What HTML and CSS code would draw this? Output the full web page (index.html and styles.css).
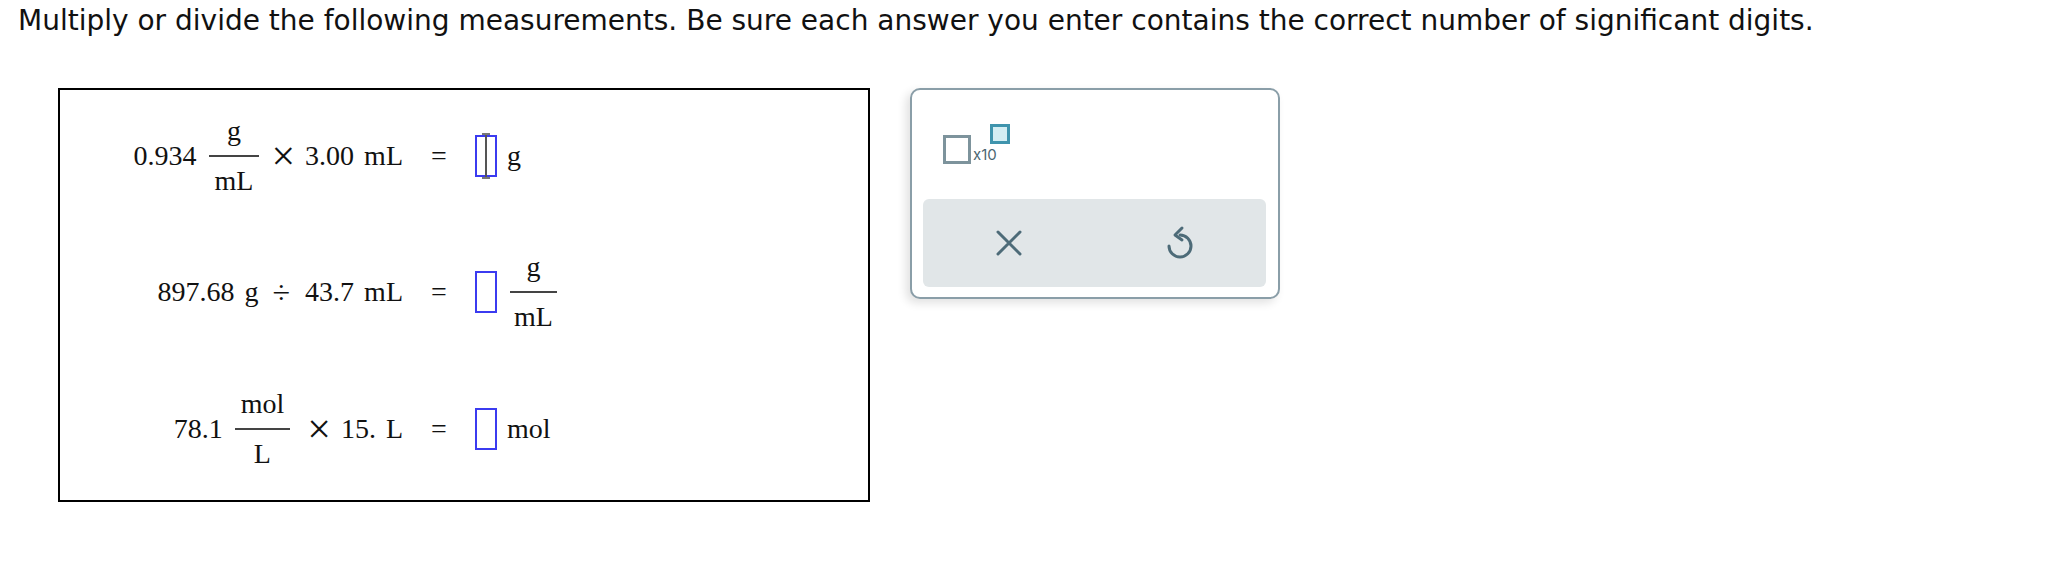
FILE: index.html
```html
<!DOCTYPE html>
<html lang="en">
<head>
<meta charset="utf-8">
<title>Significant digits</title>
<link rel="stylesheet" href="styles.css">
</head>
<body>
<p class="prompt">Multiply or divide the following measurements. Be sure each answer you enter contains the correct number of significant digits.</p>
<div class="workspace">
  <div class="problems">
    <div class="lhs">
      <span class="num">0.934</span>
      <span class="frac"><span class="top">g</span><span class="bar"></span><span class="bot">mL</span></span>
      <span class="op">×</span><span class="num">3.00</span><span class="unit">mL</span>
    </div>
    <div class="eq">=</div>
    <div class="ans">
      <span class="box active"><span class="caret"></span></span>
      <span class="unit">g</span>
    </div>

    <div class="lhs">
      <span class="num">897.68</span><span class="unit">g</span>
      <span class="op div">÷</span><span class="num">43.7</span><span class="unit">mL</span>
    </div>
    <div class="eq">=</div>
    <div class="ans">
      <span class="box"></span>
      <span class="frac"><span class="top">g</span><span class="bar"></span><span class="bot">mL</span></span>
    </div>

    <div class="lhs">
      <span class="num">78.1</span>
      <span class="frac wide"><span class="top">mol</span><span class="bar"></span><span class="bot">L</span></span>
      <span class="op">×</span><span class="num">15.</span><span class="unit">L</span>
    </div>
    <div class="eq">=</div>
    <div class="ans">
      <span class="box"></span>
      <span class="unit">mol</span>
    </div>
  </div>

  <div class="panel">
    <div class="sci">
      <span class="base"></span>
      <span class="x10">x10</span>
      <span class="exp"></span>
    </div>
    <div class="actions">
      <button class="act" type="button" aria-label="Clear">
        <svg width="26" height="26" viewBox="0 0 26 26"><path d="M2 2 L24 24 M24 2 L2 24" stroke="#4d6b78" stroke-width="3" stroke-linecap="round" fill="none"/></svg>
      </button>
      <button class="act" type="button" aria-label="Undo">
        <svg width="30" height="36" viewBox="0 0 30 36"><path d="M15 10 A11 11 0 1 1 4 21" stroke="#4d6b78" stroke-width="3" stroke-linecap="round" fill="none"/><path d="M17 3 L10 10 L17 15" stroke="#4d6b78" stroke-width="3" stroke-linecap="round" stroke-linejoin="round" fill="none"/></svg>
      </button>
    </div>
  </div>
</div>
</body>
</html>
```
FILE: styles.css
```css
body {
  margin: 8px;
  background: #ffffff;
  color: #000;
}
.prompt {
  margin: 0 0 0 10px;
  font-family: "DejaVu Sans", Verdana, sans-serif;
  font-size: 28px;
  line-height: 26px;
  color: #111;
  white-space: nowrap;
}
.workspace {
  display: flex;
  align-items: flex-start;
  gap: 40px;
  margin: 54px 0 0 50px;
}
.problems {
  width: 808px;
  height: 410px;
  border: 2px solid #000;
  display: grid;
  grid-template-columns: 343px 72px 1fr;
  grid-template-rows: 132px 140px 134px;
  align-items: center;
  font-family: "Liberation Serif", "Times New Roman", serif;
  font-size: 28px;
  color: #111;
}
.lhs {
  display: flex;
  justify-content: flex-end;
  align-items: center;
}
.eq {
  text-align: center;
}
.ans {
  display: flex;
  align-items: center;
}
.frac {
  display: inline-flex;
  flex-direction: column;
  align-items: center;
  line-height: 30px;
  margin-left: 12px;
}
.frac .top,
.frac .bot {
  padding: 0 6px;
}
.frac .bar {
  display: block;
  align-self: stretch;
  height: 2px;
  background: #444;
  margin: 9px 0;
}
.frac.wide {
  margin-right: 5px;
}
.ans .frac {
  margin-left: 13px;
}
.ans .frac .top,
.ans .frac .bot {
  padding: 0 4px;
}
.op {
  font-size: 42px;
  line-height: 1;
  margin: 0 10px 0 12px;
}
.op.div {
  font-size: 32px;
  margin: 0 15px 0 14px;
}
.unit {
  margin-left: 10px;
}
.box {
  display: inline-block;
  position: relative;
  width: 18px;
  height: 38px;
  border: 2px solid #3b3bf0;
}
.caret {
  position: absolute;
  left: 8px;
  top: -4px;
  width: 2px;
  height: 46px;
  background: #555;
}
.caret::before,
.caret::after {
  content: "";
  position: absolute;
  left: -3px;
  width: 8px;
  height: 2px;
  background: #777;
}
.caret::before { top: 0; }
.caret::after { bottom: 0; }

.panel {
  width: 343px;
  height: 197px;
  border: 2px solid #8a9ea8;
  border-radius: 10px;
  background: #fff;
  box-shadow: -4px 4px 10px rgba(0, 0, 0, 0.12);
  display: flex;
  flex-direction: column;
  justify-content: space-between;
  padding: 0 12px 10px 11px;
}
.sci {
  display: flex;
  align-items: flex-start;
  padding: 33px 0 0 20px;
  height: 40px;
}
.base {
  display: block;
  width: 22px;
  height: 23px;
  border: 3px solid #7d939c;
  margin-top: 12px;
}
.x10 {
  font-family: "Inter", "Noto Sans", sans-serif;
  font-size: 15px;
  color: #4a6672;
  margin: 22px 0 0 2px;
}
.exp {
  display: block;
  width: 14px;
  height: 14px;
  border: 3px solid #3f94ad;
  background: #d4eef3;
  margin: 1px 0 0 -7px;
}
.actions {
  display: flex;
  height: 88px;
  background: #e1e6e8;
  border-radius: 6px;
}
.act {
  flex: 1;
  display: flex;
  align-items: center;
  justify-content: center;
  background: none;
  border: 0;
  padding: 0;
}
```
